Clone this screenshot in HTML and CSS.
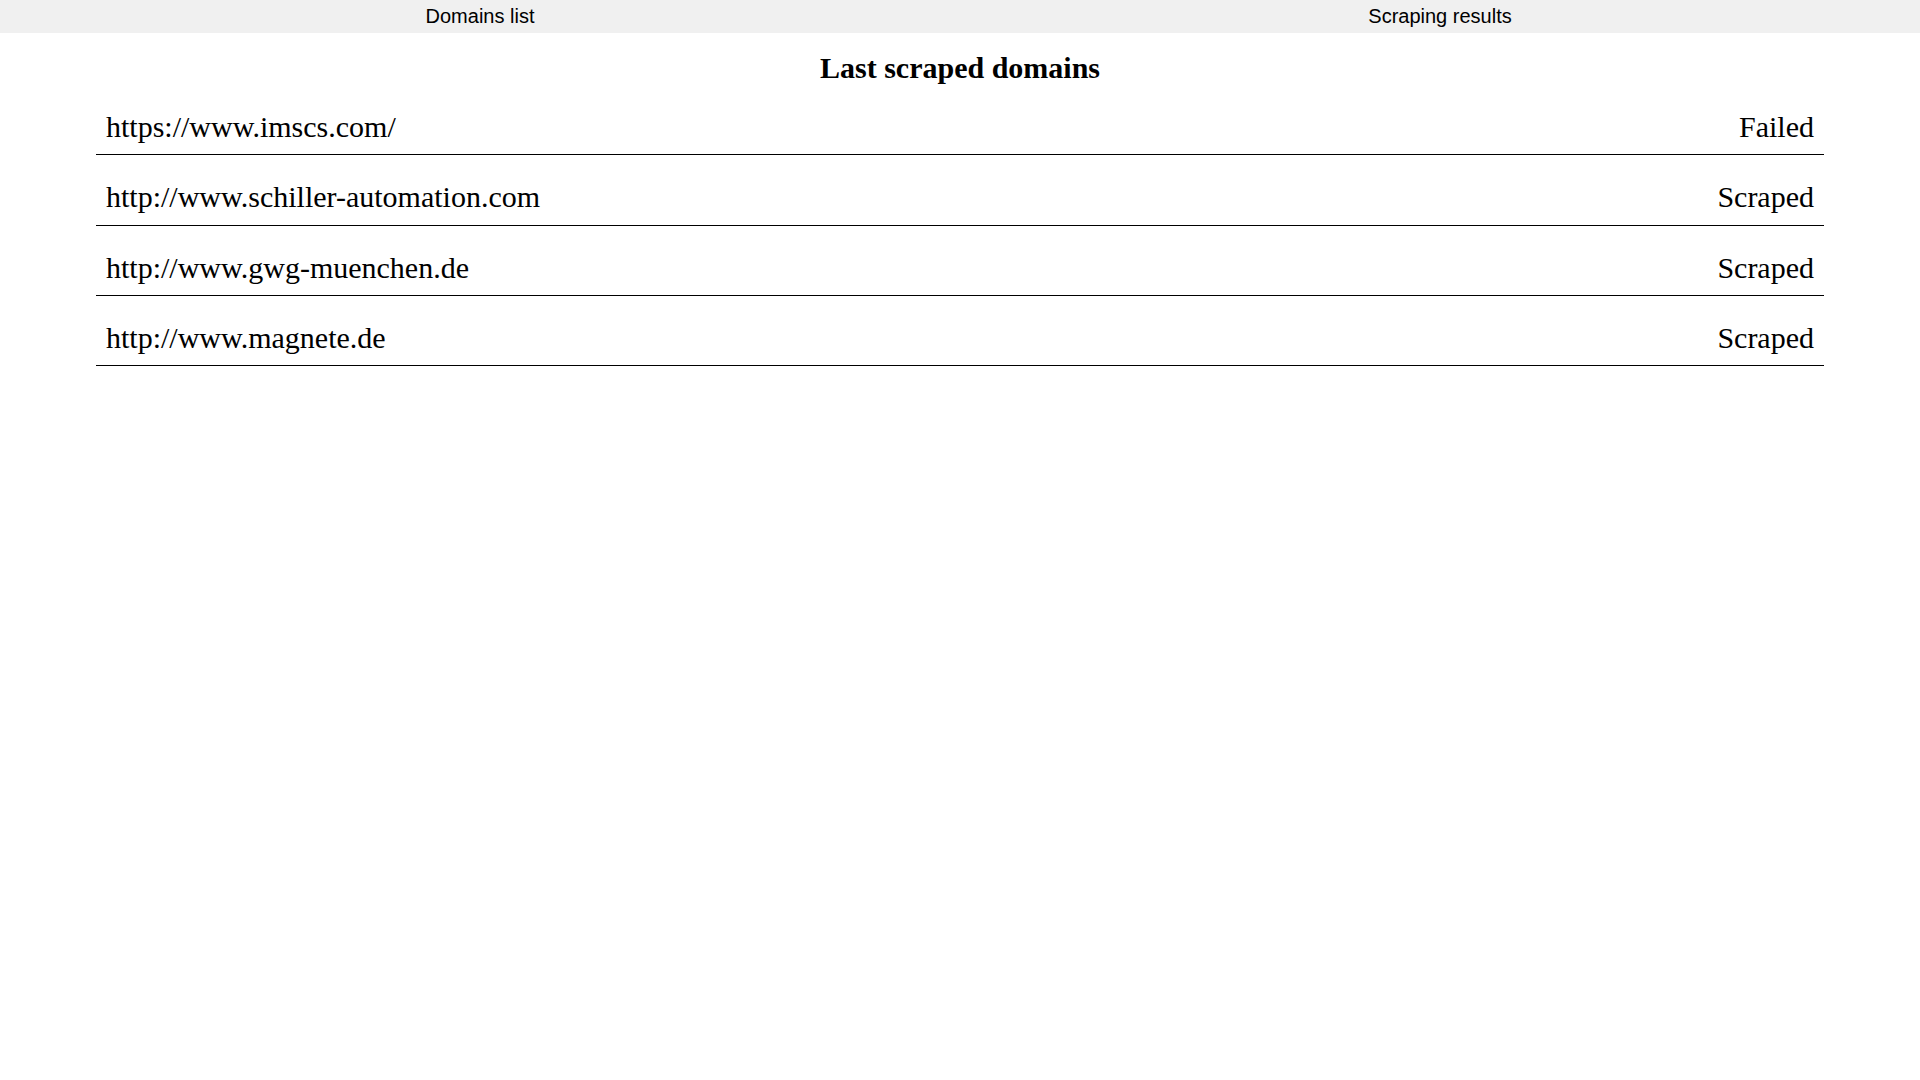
FILE: index.html
```html
<!DOCTYPE html>
<html lang="en">
<head>
<meta charset="utf-8">
<title>Last scraped domains</title>
<link rel="stylesheet" href="styles.css">
</head>
<body>
<nav class="topnav">
  <a class="nav-link" href="#">Domains list</a>
  <a class="nav-link" href="#">Scraping results</a>
</nav>
<main class="content">
  <h2 class="title">Last scraped domains</h2>
  <ul class="domain-list">
    <li class="domain-row"><span class="domain-url">https://www.imscs.com/</span><span class="domain-status">Failed</span></li>
    <li class="domain-row"><span class="domain-url">http://www.schiller-automation.com</span><span class="domain-status">Scraped</span></li>
    <li class="domain-row"><span class="domain-url">http://www.gwg-muenchen.de</span><span class="domain-status">Scraped</span></li>
    <li class="domain-row"><span class="domain-url">http://www.magnete.de</span><span class="domain-status">Scraped</span></li>
  </ul>
</main>
</body>
</html>
```

FILE: styles.css
```css
html, body {
  margin: 0;
  padding: 0;
  background: #ffffff;
  color: #000000;
  font-family: "Liberation Serif", "Times New Roman", serif;
}

.topnav {
  display: grid;
  grid-template-columns: 1fr 1fr;
  background: #f0f0f0;
  padding: 5px 0 5px;
  font-family: "Liberation Sans", Arial, sans-serif;
  font-size: 20px;
  line-height: 23px;
}

.nav-link {
  text-align: center;
  color: #000000;
  text-decoration: none;
}

.content {
  width: 90%;
  margin: 0 auto;
}

.title {
  margin: 18px 0 0;
  text-align: center;
  font-size: 30px;
  font-weight: bold;
  line-height: 34px;
}

.domain-list {
  list-style: none;
  margin: 0;
  padding: 0;
}

.domain-row {
  display: flex;
  justify-content: space-between;
  align-items: baseline;
  padding: 25px 10px 10px;
  border-bottom: 1px solid #000000;
  font-size: 30px;
  line-height: 34.35px;
}
```
